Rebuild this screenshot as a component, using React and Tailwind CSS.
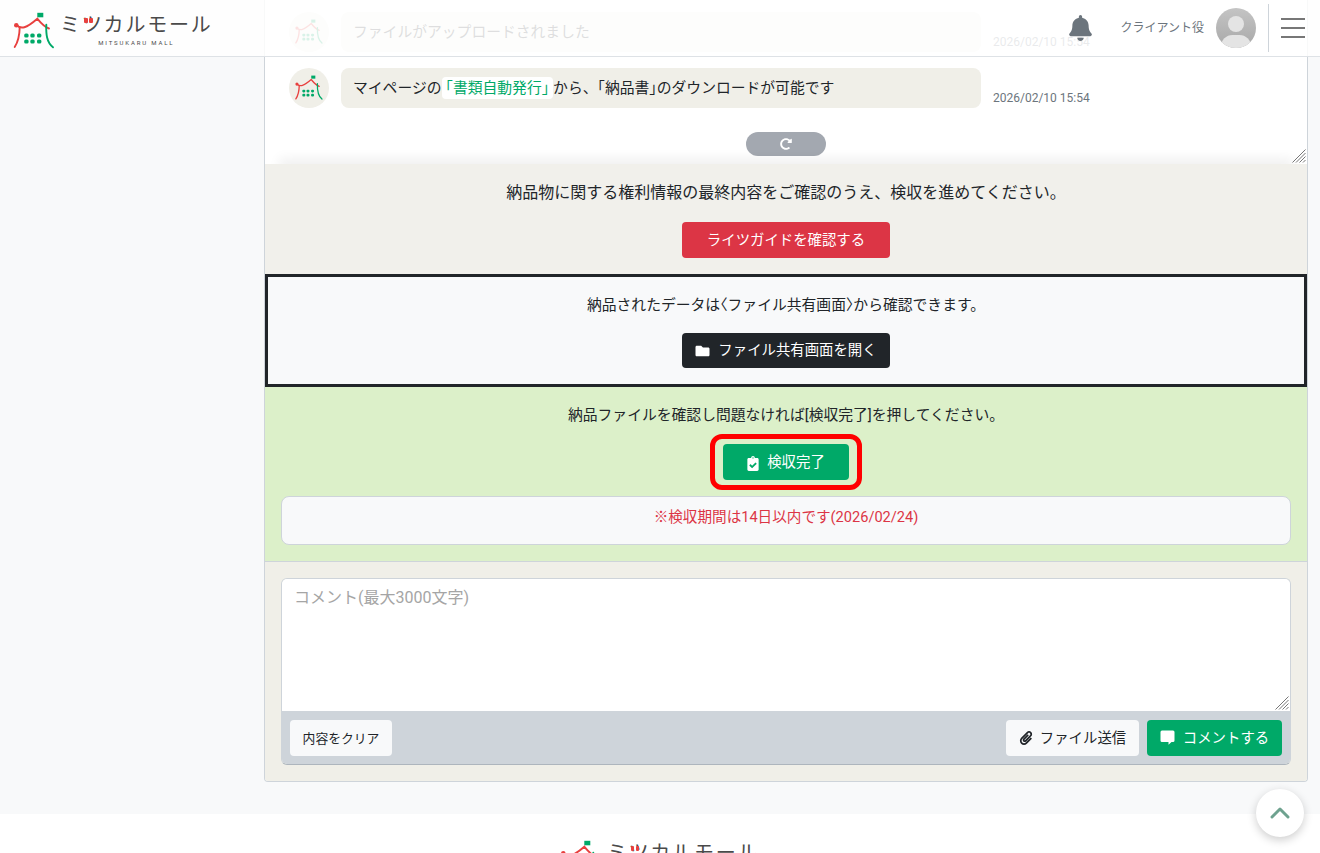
import { FaBell, FaClipboardCheck, FaFolder, FaPaperclip, FaRedoAlt } from "react-icons/fa";
import { ChevronUp } from "lucide-react";

const FONT = "font-['Roboto','Noto_Sans_CJK_JP',sans-serif]";

function LogoMark({ className }) {
    return (
        <svg viewBox="0 0 44 38" className={className}>
            <rect x="25.3" y="0.8" width="6" height="4.5" fill="#00a968" />
            <circle cx="4.3" cy="13.3" r="2.3" fill="#e8403f" />
            <g fill="none" stroke="#e8403f" strokeWidth="1.9" strokeLinecap="round">
                <path d="M2.7 35 C6 30 7.5 24 7.7 15.5" />
                <path d="M4.3 13 C9 17.5 14 16.5 25.3 6.7 C28 10 32 15 37 16.5" />
            </g>
            <path
                d="M34.3 12.7 C34 22 34.5 30 41 35.3"
                fill="none"
                stroke="#00a968"
                strokeWidth="1.9"
                strokeLinecap="round"
            />
            {[21.5, 27.5].map((y) =>
                [12.2, 18.3, 25].map((x) => (
                    <rect key={`${x}-${y}`} x={x} y={y} width="4.4" height="4" rx="1.6" fill="#00a968" />
                ))
            )}
        </svg>
    );
}

function Logo() {
    return (
        <div className="flex h-9 items-start">
            <LogoMark className="h-[38px] w-[44px] shrink-0" />
            <div className="ml-[4px] flex flex-col items-center">
                <div className="relative whitespace-nowrap text-[20px] leading-[26px] tracking-[1.8px] text-[#4a4a4a]">
                    ミツカルモール
                    <span className="absolute left-[24px] top-[6px] h-[5px] w-[3.5px] rounded-[1px] bg-[#e8403f]" />
                    <span className="absolute left-[29px] top-[6px] h-[5px] w-[3.5px] rounded-[1px] bg-[#e8403f]" />
                </div>
                <div className="mt-[1px] whitespace-nowrap text-[6px] leading-[8px] tracking-[1.85px] text-[#4a4a4a]">
                    MITSUKARU MALL
                </div>
            </div>
        </div>
    );
}

function Avatar() {
    return (
        <div className="flex h-10 w-10 shrink-0 items-center justify-center rounded-full bg-[#f0efe8]">
            <LogoMark className="h-[26px] w-[30px]" />
        </div>
    );
}

function Message({ children }) {
    return (
        <div className="flex items-end">
            <Avatar />
            <div className="ml-3 flex h-10 w-[640px] items-center rounded-lg bg-[#f0efe8] px-3 text-[14.8px] text-[#212529]">
                {children}
            </div>
            <div className="ml-3 mb-[3px] text-xs leading-[14px] text-[#6c757d]">
                2026/02/10 15:54
            </div>
        </div>
    );
}

function Half({ children }) {
    return <span className="[font-feature-settings:'halt']">{children}</span>;
}

function Grip({ className }) {
    return (
        <svg viewBox="0 0 14 14" className={`absolute h-[14px] w-[14px] ${className}`}>
            <path
                d="M0.5 13.5 L13.5 0.5 M4 13.5 L13.5 4 M7.5 13.5 L13.5 7.5 M11 13.5 L13.5 11"
                stroke="#777"
                strokeWidth="1"
                fill="none"
            />
        </svg>
    );
}

export default function App() {
    return (
        <div className={`relative h-[853px] overflow-hidden bg-[#f8f9fa] text-[#212529] ${FONT}`}>
            <header className="absolute inset-x-0 top-0 z-10 flex h-[57px] items-center border-b border-[#dee2e6] bg-white/85 pl-3 pr-[15px]">
                <div className="pt-[3px]">
                    <Logo />
                </div>
                <FaBell className="ml-auto h-[26px] w-[23px] text-[#6c757d]" />
                <span className="ml-[28px] text-xs text-[#6c757d]">クライアント役</span>
                <div className="relative ml-3 h-10 w-10 overflow-hidden rounded-full bg-gradient-to-b from-[#c4c4c4] to-[#a8a8a8]">
                    <div className="mx-auto mt-2 h-4 w-4 rounded-full bg-[#e4e4e4]" />
                    <div className="absolute -bottom-[10px] left-[5px] h-[23px] w-[30px] rounded-full bg-[#e4e4e4]" />
                </div>
                <div className="ml-3 h-12 w-px bg-[#ced4da]" />
                <div className="ml-3 flex w-6 flex-col gap-[7px]">
                    <div className="h-0.5 bg-[#777]" />
                    <div className="h-0.5 bg-[#777]" />
                    <div className="h-0.5 bg-[#777]" />
                </div>
            </header>

            <main className="ml-[264px] w-[1044px] overflow-hidden rounded-b border-x border-b border-[#ced4da]">
                <div className="relative h-[164px] overflow-hidden bg-white px-6 pt-3">
                    <div className="flex flex-col gap-4">
                        <Message>ファイルがアップロードされました</Message>
                        <Message>
                            <span className="whitespace-nowrap">マイページの</span>
                            <span className="whitespace-nowrap rounded-sm bg-white px-1 text-[#00a968]">
                                <Half>「</Half>書類自動発行<Half>」</Half>
                            </span>
                            <span className="whitespace-nowrap">
                                から、<Half>「</Half>納品書<Half>」</Half>のダウンロードが可能です
                            </span>
                        </Message>
                    </div>
                    <div className="mt-6 flex justify-center">
                        <div className="flex h-6 w-20 items-center justify-center rounded-full bg-[#a3a8b0]">
                            <FaRedoAlt className="h-3 w-3 text-white" />
                        </div>
                    </div>
                    <div className="absolute inset-x-5 -bottom-1 h-1 shadow-[0_0_12px_6px_rgba(0,0,0,0.06)]" />
                    <Grip className="right-px bottom-px" />
                </div>

                <section className="flex h-[110px] flex-col items-center bg-[#f1f0eb] pt-[17px]">
                    <p className="text-base leading-6">
                        納品物に関する権利情報の最終内容をご確認のうえ、検収を進めてください。
                    </p>
                    <button className="mt-[17px] h-9 w-52 rounded-sm bg-[#dc3545] pt-0.5 text-[14.4px] text-white">
                        ライツガイドを確認する
                    </button>
                </section>

                <section className="flex h-[113px] flex-col items-center border-[3px] border-[#212529] bg-[#f8f9fa] pt-4">
                    <p className="text-[14.8px] leading-6">
                        納品されたデータは<Half>〈</Half>ファイル共有画面<Half>〉</Half>から確認できます。
                    </p>
                    <button className="mt-4 flex h-[35px] w-52 items-center justify-center gap-2 rounded-sm bg-[#212529] text-[14.4px] text-white">
                        <FaFolder className="h-[14px] w-[15px]" />
                        ファイル共有画面を開く
                    </button>
                </section>

                <section className="flex h-[175px] flex-col items-center border-b border-[#ced4da] bg-[#dcf0c9] px-4 pt-4">
                    <p className="text-[14.8px] leading-6">
                        納品ファイルを確認し問題なければ[検収完了]を押してください。
                    </p>
                    <div className="mt-[7px] rounded-xl border-[5px] border-[#ff0000] px-2 py-[5px]">
                        <button className="flex h-9 w-[126px] items-center justify-center gap-2 rounded-sm bg-[#00a968] pt-0.5 text-[14.4px] text-white">
                            <FaClipboardCheck className="h-[15px] w-3" />
                            検収完了
                        </button>
                    </div>
                    <div className="mt-[6px] flex h-[49px] w-full justify-center rounded-lg border border-[#ced4da] bg-[#f8f9fa] pt-2 text-[14.6px] leading-6 text-[#dc3545]">
                        ※検収期間は14日以内です(2026/02/24)
                    </div>
                </section>

                <section className="bg-[#f0efe8] p-4">
                    <div className="overflow-hidden rounded-md border border-[#ced4da] border-b-[#adb5bd]">
                        <div className="relative">
                            <textarea
                                placeholder="コメント(最大3000文字)"
                                className="block h-[132px] w-full resize-none bg-white px-3 py-[7px] text-base outline-none placeholder:text-[#a5a5a5]"
                            />
                            <Grip className="right-px bottom-px" />
                        </div>
                        <div className="flex h-[53px] items-center bg-[#ced4da] px-2">
                            <button className="h-9 w-[102px] rounded-sm bg-[#f8f9fa] pt-0.5 text-[12.8px]">
                                内容をクリア
                            </button>
                            <button className="ml-auto flex h-9 w-[133px] items-center justify-center gap-[7px] rounded-sm bg-[#f8f9fa] pt-[3px] text-[14.4px]">
                                <FaPaperclip className="-mt-[3px] h-[14px] w-[14px]" />
                                ファイル送信
                            </button>
                            <button className="ml-2 flex h-9 w-[135px] items-center justify-center gap-2 rounded-sm bg-[#00a968] pt-[3px] text-[14.4px] text-white">
                                <svg viewBox="0 0 15 15" className="-mt-[3px] h-[15px] w-[15px]">
                                    <path
                                        d="M2 0.5 H13 A1.5 1.5 0 0 1 14.5 2 V10.5 A1.5 1.5 0 0 1 13 12 H11.5 L8.5 14.8 V12 H2 A1.5 1.5 0 0 1 0.5 10.5 V2 A1.5 1.5 0 0 1 2 0.5 Z"
                                        fill="currentColor"
                                    />
                                </svg>
                                コメントする
                            </button>
                        </div>
                    </div>
                </section>
            </main>

            <footer className="mt-8 flex justify-center bg-white pt-[26px]">
                <div className="pr-[2px]">
                    <Logo />
                </div>
            </footer>

            <button className="absolute left-[1256px] top-[789px] z-20 flex h-12 w-12 items-center justify-center rounded-full bg-white shadow-[0_3px_10px_rgba(0,0,0,0.2)]">
                <ChevronUp className="h-8 w-8 text-[#6ea28f]" strokeWidth={2.2} />
            </button>
        </div>
    );
}
